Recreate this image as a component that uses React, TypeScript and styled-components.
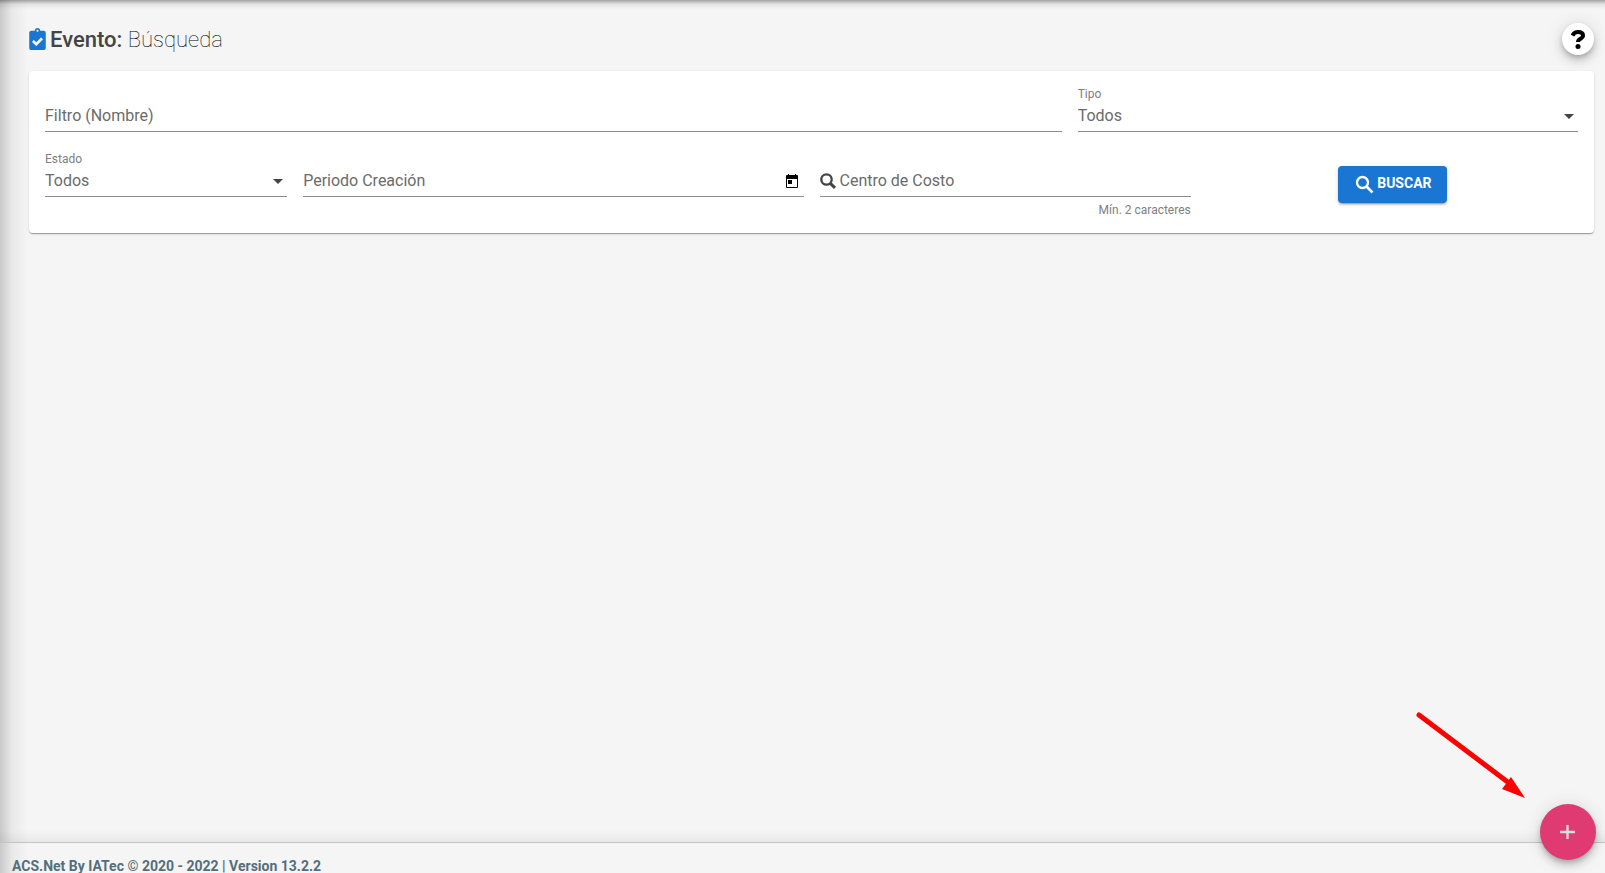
import React from "react";
import styled, { createGlobalStyle } from "styled-components";
import { FaClipboardCheck } from "react-icons/fa";

const GlobalStyle = createGlobalStyle`
  *, *::before, *::after { box-sizing: border-box; }
  body {
    margin: 0;
    background: #f5f5f5;
    color: #6b6b6b;
    font-family: Roboto, "Liberation Sans", sans-serif;
  }
  button, input, select { font: inherit; color: inherit; }
`;

const Page = styled.div`
  display: flex;
  flex-direction: column;
  min-height: 100vh;
  background:
    linear-gradient(to bottom, rgba(0, 0, 0, 0.34), rgba(0, 0, 0, 0.08) 4px, transparent 9px),
    linear-gradient(to right, rgba(0, 0, 0, 0.18), rgba(0, 0, 0, 0.05) 12px, transparent 28px);
`;

const Main = styled.main`
  flex: 1;
  padding: 23px 11px 16px 29px;
  background: linear-gradient(to top, rgba(0, 0, 0, 0.05), transparent 12px);
`;

const Header = styled.header`
  display: flex;
  align-items: center;
  justify-content: space-between;
  height: 32px;
  margin-bottom: 16px;
`;

const Title = styled.h1`
  display: flex;
  align-items: center;
  gap: 4px;
  margin: 0;
  font-size: 22px;
  line-height: 34px;
  font-weight: 500;
  color: #444;

  svg { width: 17px; height: 22px; color: #1976d2; }
`;

const TitleText = styled.span`
  padding-top: 2px;
`;

const TitleDetail = styled.span`
  font-weight: 100;
  color: #000;
`;

const HelpButton = styled.button`
  display: grid;
  place-items: center;
  width: 32px;
  height: 32px;
  padding: 0;
  border: 0;
  border-radius: 50%;
  background: #fff;
  box-shadow: 0 3px 5px -1px rgba(0, 0, 0, 0.2), 0 6px 10px rgba(0, 0, 0, 0.14), 0 1px 18px rgba(0, 0, 0, 0.12);
`;

const Card = styled.form`
  display: grid;
  grid-template-columns: repeat(12, 1fr);
  column-gap: 16px;
  padding: 16px;
  border-radius: 4px;
  background: #fff;
  box-shadow: 0 2px 1px -1px rgba(0, 0, 0, 0.2), 0 1px 1px rgba(0, 0, 0, 0.14), 0 1px 3px rgba(0, 0, 0, 0.12);
`;

const Field = styled.div<{ $span: number }>`
  grid-column: span ${(p) => p.$span};
  display: flex;
  flex-direction: column;
  min-width: 0;
  min-height: 65px;
`;

const Label = styled.label`
  height: 14px;
  font-size: 12px;
  line-height: 14px;
  color: #808080;
`;

const Control = styled.div`
  display: flex;
  align-items: center;
  gap: 4px;
  height: 31px;
  border-bottom: 1px solid #8c8c8c;
  font-size: 16px;

  > svg { flex: none; }
`;

const TextInput = styled.input`
  flex: 1;
  min-width: 0;
  height: 30px;
  padding: 0 0 2px;
  border: 0;
  outline: 0;
  background: none;
  &::placeholder { color: inherit; opacity: 1; }
`;

const Select = styled.select`
  flex: 1;
  height: 30px;
  padding: 0 0 2px;
  border: 0;
  outline: 0;
  background: none;
  appearance: none;
`;

const Caret = styled.svg`
  width: 10px;
  height: 5px;
  margin-right: 4px;
  pointer-events: none;
`;

const IconButton = styled.button`
  display: grid;
  place-items: center;
  width: 24px;
  height: 24px;
  padding: 0;
  border: 0;
  background: none;
  color: #000;
`;

const Hint = styled.small`
  padding-top: 6px;
  font-size: 12px;
  line-height: 14px;
  color: #808080;
  text-align: right;
`;

const Action = styled.div`
  grid-column: span 3;
  display: flex;
  justify-content: center;
  align-items: flex-start;
  padding-top: 14px;
`;

const SearchButton = styled.button`
  display: flex;
  align-items: center;
  height: 37px;
  padding: 0 15px;
  border: 0;
  border-radius: 4px;
  background: #1976d2;
  color: #fff;
  font-size: 14px;
  line-height: 16px;
  font-weight: 700;
  box-shadow: 0 3px 1px -2px rgba(0, 0, 0, 0.2), 0 2px 2px rgba(0, 0, 0, 0.14), 0 1px 5px rgba(0, 0, 0, 0.12);
`;

const SearchText = styled.span`
  padding-bottom: 3px;
`;

const Footer = styled.footer`
  height: 31px;
  padding: 16px 12px 0;
  border-top: 1px solid #c4c4c4;
  color: #546e7a;
  font-size: 14px;
  line-height: 14px;
  font-weight: 700;
`;

const AddButton = styled.button`
  position: fixed;
  right: 9px;
  bottom: 13px;
  display: grid;
  place-items: center;
  width: 56px;
  height: 56px;
  padding: 0;
  border: 0;
  border-radius: 50%;
  background: #e03a72;
  color: #ddd;
  box-shadow: 0 3px 5px -1px rgba(0, 0, 0, 0.2), 0 6px 10px rgba(0, 0, 0, 0.14), 0 1px 18px rgba(0, 0, 0, 0.12);
`;

const Pointer = styled.svg`
  position: fixed;
  right: 79px;
  bottom: 75px;
  width: 112px;
  height: 88px;
  pointer-events: none;
`;

function DropIcon() {
  return (
    <Caret viewBox="0 0 10 5" aria-hidden="true">
      <path d="M0 0h10L5 5z" fill="#444" />
    </Caret>
  );
}

export default function App() {
  return (
    <Page>
      <GlobalStyle />
      <Main>
        <Header>
          <Title>
            <FaClipboardCheck aria-hidden="true" />
            <TitleText>Evento: <TitleDetail>Búsqueda</TitleDetail></TitleText>
          </Title>
          <HelpButton type="button" aria-label="Ayuda">
            <svg width="14" height="20" viewBox="0 0 14 20" fill="none" stroke="#000">
              <path d="M1.500 6.500C3 3.500 5 3 7 3c3 0 5 1.300 5 3.500 0 3.500-5 3-5 6.500" strokeWidth="4" />
              <circle cx="7" cy="17.500" r="2.500" fill="#000" stroke="none" />
            </svg>
          </HelpButton>
        </Header>

        <Card onSubmit={(e) => e.preventDefault()}>
          <Field $span={8}>
            <Label as="div" />
            <Control>
              <TextInput aria-label="Filtro (Nombre)" placeholder="Filtro (Nombre)" />
            </Control>
          </Field>
          <Field $span={4}>
            <Label htmlFor="tipo">Tipo</Label>
            <Control>
              <Select id="tipo"><option>Todos</option></Select>
              <DropIcon />
            </Control>
          </Field>
          <Field $span={2}>
            <Label htmlFor="estado">Estado</Label>
            <Control>
              <Select id="estado"><option>Todos</option></Select>
              <DropIcon />
            </Control>
          </Field>
          <Field $span={4}>
            <Label as="div" />
            <Control>
              <TextInput aria-label="Periodo Creación" placeholder="Periodo Creación" />
              <IconButton type="button" aria-label="Abrir calendario">
                <svg width="12" height="14" viewBox="0 0 12 14">
                  <path fillRule="evenodd" fill="#000" d="M2 0h1v1h6V0h1v1h1a1 1 0 0 1 1 1v11a1 1 0 0 1-1 1H1a1 1 0 0 1-1-1V2a1 1 0 0 1 1-1h1zM1 5v8h10V5zM2 6h4v4H2z" />
                </svg>
              </IconButton>
            </Control>
          </Field>
          <Field $span={3}>
            <Label as="div" />
            <Control>
              <svg width="16" height="18" viewBox="0 0 16 18" fill="none" stroke="#444" aria-hidden="true">
                <circle cx="6.500" cy="7.500" r="5.200" strokeWidth="2.300" />
                <path d="m10.300 11.300 4.700 4.500" strokeWidth="3" />
              </svg>
              <TextInput aria-label="Centro de Costo" placeholder="Centro de Costo" />
            </Control>
            <Hint>Mín. 2 caracteres</Hint>
          </Field>
          <Action>
            <SearchButton type="submit">
              <svg width="24" height="24" viewBox="0 0 24 24" fill="none" stroke="currentColor" aria-hidden="true">
                <circle cx="9.500" cy="9.500" r="5.500" strokeWidth="2.300" />
                <path d="m13.500 13.500 6 6" strokeWidth="2.600" />
              </svg>
              <SearchText>BUSCAR</SearchText>
            </SearchButton>
          </Action>
        </Card>
      </Main>
      <Footer>ACS.Net By IATec © 2020 - 2022 | Version 13.2.2</Footer>
      <Pointer viewBox="0 0 112 88" aria-hidden="true">
        <path d="M5 5 95 73" stroke="#f00" strokeWidth="5" strokeLinecap="round" />
        <path d="M97 67 111 88 88 79z" fill="#f00" />
      </Pointer>
      <AddButton type="button" aria-label="Agregar">
        <svg width="24" height="24" viewBox="0 0 24 24" aria-hidden="true">
          <path d="M4 11h15M11.500 4v14" stroke="currentColor" strokeWidth="2.400" transform="translate(0 1)" />
        </svg>
      </AddButton>
    </Page>
  );
}
